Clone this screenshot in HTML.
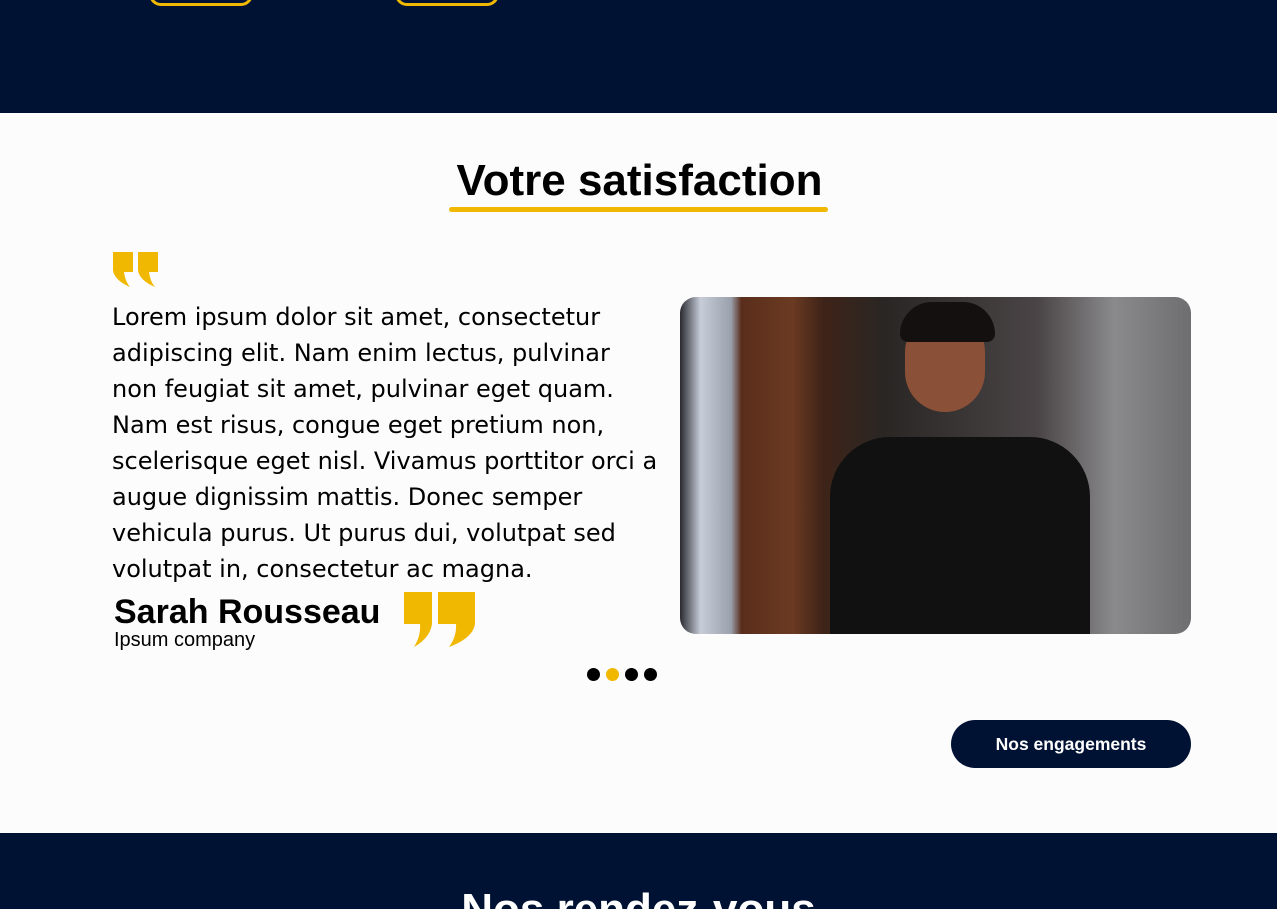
<!DOCTYPE html>
<html><head><meta charset="utf-8"><style>
*{margin:0;padding:0;box-sizing:border-box}
body{width:1277px;height:909px;overflow:hidden;background:#fcfcfc;font-family:"Liberation Sans",sans-serif;position:relative}
.top{position:absolute;left:0;top:0;width:1277px;height:113px;background:#001234}
.pill{position:absolute;top:-20px;width:104px;height:26px;border:3px solid #f0b800;border-radius:12px}
h2{position:absolute;top:156px;left:0;width:1277px;text-align:center;font-size:44px;font-weight:bold;color:#000;padding-left:2px}
.ul{position:absolute;left:449px;top:207px;width:379px;height:5px;border-radius:3px;background:#f0b800}
.txt{position:absolute;left:112px;top:299px;white-space:nowrap;font-family:"DejaVu Sans",sans-serif;font-size:24px;line-height:36px;color:#000}
.name{position:absolute;left:114px;top:593px;font-size:34px;font-weight:bold}
.comp{position:absolute;left:114px;top:629px;font-size:20px}
.dots{position:absolute;top:668px;left:587px;display:flex;gap:6px}
.dots span{width:13px;height:13px;border-radius:50%;background:#000}
.photo{position:absolute;left:680px;top:297px;width:511px;height:337px;border-radius:16px;overflow:hidden;background:linear-gradient(90deg,#2a2a30 0%,#c6ccd8 4%,#9aa0ac 10%,#5a2e1c 12%,#6b3a22 22%,#3e2418 28%,#2a2624 40%,#4a4446 70%,#8a8a8c 85%,#6e6e70 100%)}
.btn{position:absolute;left:951px;top:720px;width:240px;height:48px;border-radius:24px;background:#001234;color:#fff;font-size:17.5px;font-weight:bold;text-align:center;line-height:48px}
.bot{position:absolute;left:0;top:833px;width:1277px;height:76px;background:#001234;overflow:hidden}
.bot div{position:absolute;top:52px;width:1277px;text-align:center;color:#fff;font-size:44px;font-weight:bold}
</style></head><body>
<div class="top"><div class="pill" style="left:149px"></div><div class="pill" style="left:395px"></div></div>
<h2>Votre satisfaction</h2><div class="ul"></div>
<svg style="position:absolute;left:113px;top:252px" width="46" height="36" viewBox="0 0 46 36"><path d="M0 0H20V20H11Q12 29 17 35Q1 28 0 18Z M25 0H45V20H36Q37 29 42 35Q26 28 25 18Z" fill="#f0b800"/></svg>
<div class="txt">Lorem ipsum dolor sit amet, consectetur<br>adipiscing elit. Nam enim lectus, pulvinar<br>non feugiat sit amet, pulvinar eget quam.<br>Nam est risus, congue eget pretium non,<br>scelerisque eget nisl. Vivamus porttitor orci a<br>augue dignissim mattis. Donec semper<br>vehicula purus. Ut purus dui, volutpat sed<br>volutpat in, consectetur ac magna.</div>
<div class="name">Sarah Rousseau</div><div class="comp">Ipsum company</div>
<svg style="position:absolute;left:404px;top:592px" width="72" height="56" viewBox="0 0 72 56"><path d="M0 0H28V32Q26 46 10 55Q17 44 16 32H0Z M34 0H71V32Q69 46 45 55Q53 44 52 32H34Z" fill="#f0b800"/></svg>
<div class="dots"><span></span><span style="background:#f0b800"></span><span></span><span></span></div>
<div class="photo">
<div style="position:absolute;left:150px;top:140px;width:260px;height:200px;background:#111;border-radius:60px 60px 0 0"></div>
<div style="position:absolute;left:225px;top:15px;width:80px;height:100px;background:#8a5038;border-radius:40px"></div>
<div style="position:absolute;left:220px;top:5px;width:95px;height:40px;background:#151010;border-radius:40px 40px 10px 10px"></div>
</div>
<div class="btn">Nos engagements</div>
<div class="bot"><div>Nos rendez-vous</div></div>
</body></html>
